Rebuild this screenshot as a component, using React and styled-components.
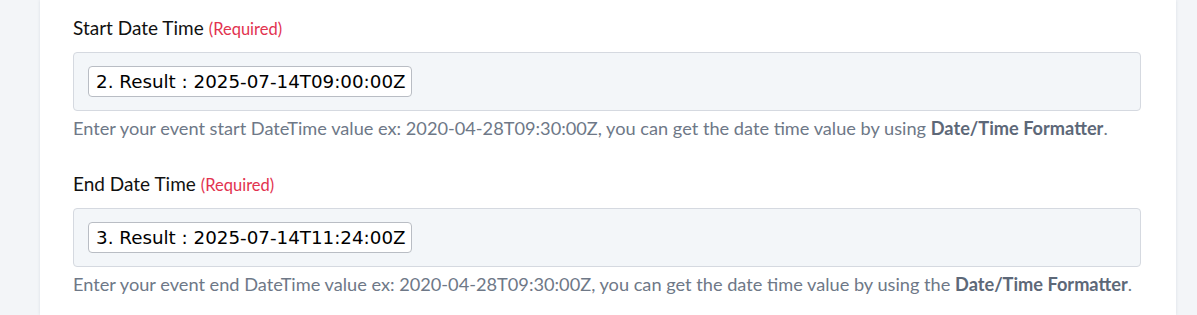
import React from 'react';
import styled, { createGlobalStyle } from 'styled-components';

const GlobalStyle = createGlobalStyle`
  html, body {
    margin: 0;
    padding: 0;
    background: #f3f5f8;
  }
  body {
    font-family: Lato, "Liberation Sans", sans-serif;
  }
`;

const Page = styled.div`
  display: flex;
  height: 315px;
  overflow: hidden;
  padding: 0 21px 0 40px;
`;

const Panel = styled.div`
  flex: 1;
  background: #ffffff;
  box-shadow: 0 0 3px rgba(40, 60, 90, 0.12);
  padding: 16px 35px 0 33px;
`;

const Field = styled.div`
  margin-bottom: 32px;
`;

const Label = styled.div`
  font-size: 19px;
  line-height: 24px;
  color: #111111;
  margin-bottom: 11px;
`;

const Required = styled.span`
  font-size: 16.5px;
  color: #e2334f;
  margin-left: 5px;
`;

const InputBox = styled.div`
  height: 59px;
  box-sizing: border-box;
  display: flex;
  align-items: center;
  padding: 0 14px;
  background: #f3f6f9;
  border: 1px solid #d5d9e0;
  border-radius: 4px;
`;

const Chip = styled.span`
  font-family: "DejaVu Sans", Verdana, sans-serif;
  font-size: 18.3px;
  line-height: 29px;
  color: #000000;
  background: #ffffff;
  border: 1px solid #b9bdc4;
  border-radius: 4px;
  padding: 0 5px 0 7px;
`;

const Help = styled.p`
  margin: 5px 0 0;
  font-size: 18.2px;
  line-height: 24px;
  color: #6e7887;

  b {
    color: #5d6878;
    font-weight: 700;
  }
`;

const fields = [
  {
    label: 'Start Date Time',
    value: '2. Result : 2025-07-14T09:00:00Z',
    help: 'Enter your event start DateTime value ex: 2020-04-28T09:30:00Z, you can get the date time value by using ',
  },
  {
    label: 'End Date Time',
    value: '3. Result : 2025-07-14T11:24:00Z',
    help: 'Enter your event end DateTime value ex: 2020-04-28T09:30:00Z, you can get the date time value by using the ',
  },
];

const App = () => (
  <>
    <GlobalStyle />
    <Page>
      <Panel>
        {fields.map((f) => (
          <Field key={f.label}>
            <Label>
              {f.label}
              <Required>(Required)</Required>
            </Label>
            <InputBox>
              <Chip>{f.value}</Chip>
            </InputBox>
            <Help>
              {f.help}
              <b>Date/Time Formatter</b>.
            </Help>
          </Field>
        ))}
      </Panel>
    </Page>
  </>
);

export default App;
